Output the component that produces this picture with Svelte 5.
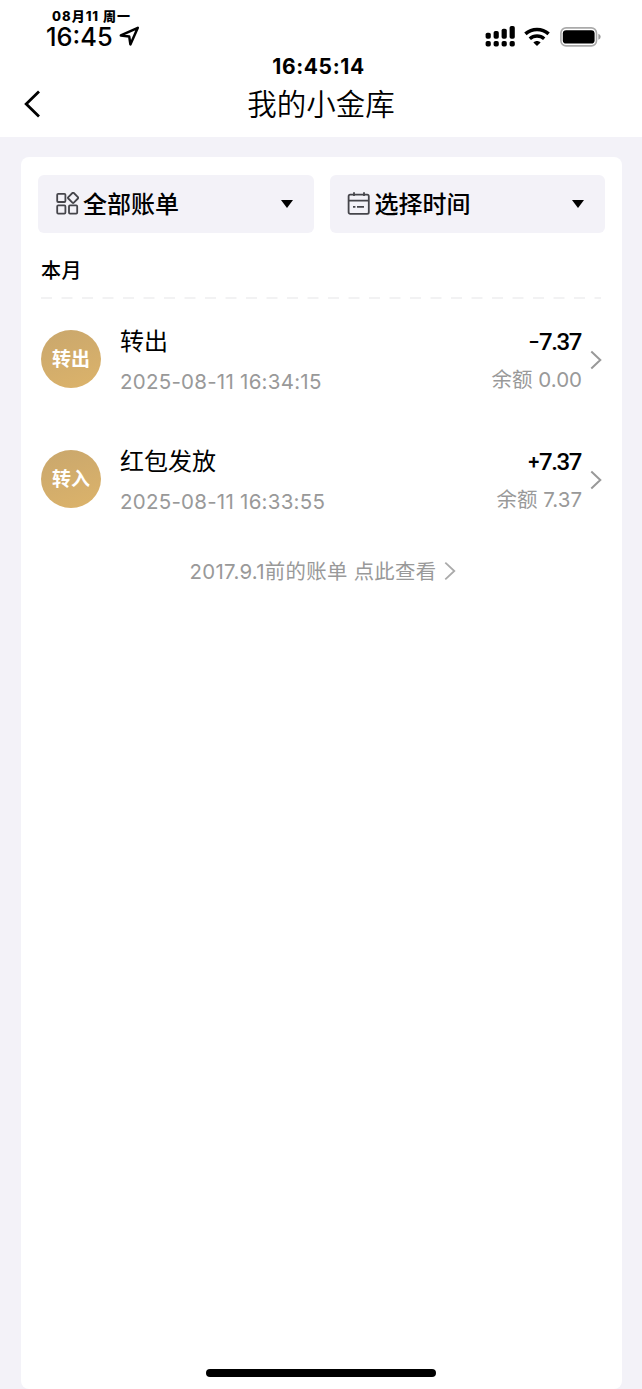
<script lang="ts">
    type Bill = {
        badge: string;
        title: string;
        time: string;
        sign: string;
        amount: string;
        balance: string;
    };

    const bills: Bill[] = [
        { badge: '转出', title: '转出', time: '2025-08-11 16:34:15', sign: '−', amount: '7.37', balance: '0.00' },
        { badge: '转入', title: '红包发放', time: '2025-08-11 16:33:55', sign: '+', amount: '7.37', balance: '7.37' },
    ];
</script>

<div class="page">
    <header>
        <div class="status-bar">
            <div class="status-left">
                <div class="date">08月11 周一</div>
                <div class="clock">
                    <span>16:45</span>
                    <svg width="21" height="21" viewBox="0 0 21 21">
                        <path d="M1.8 9.4 18.8 1.8 11.4 18.4 10.2 10.4Z" fill="none" stroke="#000" stroke-width="2.5" stroke-linejoin="round" />
                    </svg>
                </div>
            </div>
            <div class="status-right">
                <svg width="30" height="21" viewBox="0 0 30 21">
                    <rect x=".6" y="6.7" width="5.2" height="6" rx="1.8" />
                    <rect x="8.6" y="5" width="5.2" height="7.7" rx="1.8" />
                    <rect x="16.6" y="2.8" width="5.2" height="9.9" rx="1.8" />
                    <rect x="24.6" y="0" width="5.2" height="12.7" rx="1.8" />
                    {#each [0.6, 8.6, 16.6, 24.6] as x}
                        <rect {x} y="15" width="5.2" height="5.6" rx="1.8" />
                    {/each}
                </svg>
                <svg class="wifi" width="26" height="20" viewBox="0 0 26 20">
                    <path d="M1.4 6.9C8 .9 18 .9 24.6 6.9" fill="none" stroke="#000" stroke-width="3.5" />
                    <path d="M5.8 11.7C9.9 8 16.1 8 20.2 11.7" fill="none" stroke="#000" stroke-width="3.4" />
                    <path d="M9.4 15.4C11.5 13.4 14.5 13.4 16.6 15.4L13 19Z" />
                </svg>
                <svg width="41" height="20" viewBox="0 0 41 20">
                    <rect x=".9" y=".9" width="35.6" height="18" rx="5.2" fill="#fff" stroke="#aaa" stroke-width="1.6" />
                    <rect x="2.8" y="3.2" width="31.8" height="13.4" rx="3.4" />
                    <path d="M38.4 6.8Q40.7 7.6 40.7 9.8T38.4 12.8Z" fill="#999" />
                </svg>
            </div>
        </div>
        <div class="seconds">16:45:14</div>
        <nav>
            <svg class="back" width="20" height="28" viewBox="0 0 20 28">
                <path d="M17 1.6 4.2 14 17 26.4" fill="none" stroke="#000" stroke-width="2.8" />
            </svg>
            <h1>我的小金库</h1>
        </nav>
    </header>

    <main>
        <div class="filters">
            <div class="filter">
                <svg width="24" height="24" viewBox="0 0 24 24" fill="none" stroke="#45454b" stroke-width="1.8">
                    <rect x="2.2" y="1.8" width="8.2" height="8.2" rx="1" />
                    <rect x="2.2" y="13.4" width="8.2" height="8.2" rx="1" />
                    <rect x="14" y="13.4" width="8.2" height="8.2" rx="1" />
                    <rect x="14.2" y="1.9" width="7.8" height="7.8" rx="1" transform="rotate(45 18.1 5.8)" />
                </svg>
                <span>全部账单</span>
                <i class="caret"></i>
            </div>
            <div class="filter">
                <svg width="24" height="24" viewBox="0 0 24 24" fill="none" stroke="#45454b" stroke-width="1.8">
                    <rect x="1.6" y="2.6" width="20.2" height="19.2" rx="1.6" />
                    <path d="M1.6 8.7H21.8M7 .3V4M17 .3V4M6 14.8H8.4M10 14.8H17" />
                </svg>
                <span>选择时间</span>
                <i class="caret"></i>
            </div>
        </div>

        <h2>本月</h2>
        <svg class="dashes" width="560" height="2" viewBox="0 0 560 2">
            <path d="M0 1H560" stroke="#eeeef0" stroke-width="1.6" stroke-dasharray="11 9.5" />
        </svg>

        {#each bills as bill}
            <div class="bill">
                <div class="badge">{bill.badge}</div>
                <div class="info">
                    <div class="bill-title">{bill.title}</div>
                    <div class="time">{bill.time}</div>
                </div>
                <div class="money">
                    <div class="amount"><span class="sign">{bill.sign}</span>{bill.amount}</div>
                    <div class="balance">余额 {bill.balance}</div>
                </div>
                <svg class="arrow" width="12" height="20" viewBox="0 0 12 20">
                    <path d="M1.3 1.6 10.3 10 1.3 18.4" fill="none" stroke="#999" stroke-width="2" />
                </svg>
            </div>
        {/each}

        <div class="older">
            <span>2017.9.1前的账单 点此查看</span>
            <svg width="12" height="20" viewBox="0 0 12 20">
                <path d="M1.3 1.6 10.3 10 1.3 18.4" fill="none" stroke="#aaa" stroke-width="1.8" />
            </svg>
        </div>
    </main>
    <div class="home-indicator"></div>
</div>

<style>
    :global(body) {
        margin: 0;
        background: #f3f2f8;
    }

    .page {
        position: relative;
        box-sizing: border-box;
        height: 1389px;
        display: flex;
        flex-direction: column;
        background: #f3f2f8;
        color: #000;
        font-family: Inter, "Noto Sans CJK SC", sans-serif;
    }

    header {
        box-sizing: border-box;
        height: 137px;
        flex-shrink: 0;
        background: #fff;
    }

    /* Status bar */
    .status-bar {
        display: flex;
        justify-content: space-between;
        height: 55px;
        padding: 0 41px 0 46px;
    }

    .date {
        height: 14px;
        margin: 9px 0 0 6px;
        font-size: 13px;
        line-height: 14px;
        font-weight: 800;
        letter-spacing: 1px;
        white-space: nowrap;
    }

    .clock {
        display: flex;
        align-items: center;
        gap: 6px;
        height: 27px;
        font-size: 25.4px;
        line-height: 27px;
        font-weight: 550;
    }

    .status-right {
        display: flex;
        align-items: center;
        height: 21px;
        margin-top: 26px;
    }

    .wifi {
        margin: 0 10px 0 9px;
    }

    .seconds {
        height: 22px;
        padding: 1px 5px 0 0;
        font-size: 21px;
        line-height: 22px;
        font-weight: 700;
        letter-spacing: 0.6px;
        text-align: center;
    }

    nav {
        display: flex;
        align-items: center;
        height: 52px;
        padding: 0 22px;
    }

    .back {
        flex-shrink: 0;
    }

    h1 {
        flex: 1;
        margin: 0 20px 0 0;
        font-size: 29.5px;
        line-height: 40px;
        font-weight: 350;
        text-align: center;
    }

    /* Card */
    main {
        box-sizing: border-box;
        height: 1232px;
        margin: 20px 20px 0 21px;
        padding: 18px 17px 0;
        border-radius: 8px;
        background: #fff;
    }

    .filters {
        display: flex;
        gap: 16px;
    }

    .filter {
        box-sizing: border-box;
        display: flex;
        align-items: center;
        flex: 1;
        height: 58px;
        padding: 0 21px 0 17px;
        border-radius: 6px;
        background: #f3f2f8;
        font-size: 24px;
        font-weight: 500;
    }

    .filter span {
        flex: 1;
        margin: -4px 0 0 4px;
    }

    .caret {
        border: 6.5px solid transparent;
        border-top: 8px solid #000;
        border-bottom: 0;
    }

    h2 {
        margin: 23px 0 0 3px;
        font-size: 20px;
        line-height: 30px;
        font-weight: 500;
        letter-spacing: 0.4px;
    }

    .dashes {
        display: block;
        margin: 11px 0 0 3px;
    }

    .bill {
        display: flex;
        align-items: center;
        height: 120px;
        margin-left: 3px;
    }

    .badge {
        width: 60px;
        height: 58px;
        border-radius: 50%;
        background: linear-gradient(160deg, #c9a76d, #dcb36a);
        color: #fff;
        font-size: 19px;
        line-height: 60px;
        font-weight: 700;
        text-align: center;
    }

    .info {
        flex: 1;
        margin: 2px 0 0 19px;
    }

    .bill-title {
        font-size: 24px;
        line-height: 36px;
        font-weight: 400;
    }

    .time,
    .balance {
        margin-top: 7px;
        color: #999;
        font-size: 20.5px;
        line-height: 30px;
        font-weight: 375;
        white-space: nowrap;
    }

    .time {
        letter-spacing: 0.25px;
    }

    .money {
        text-align: right;
    }

    .amount {
        display: flex;
        align-items: center;
        justify-content: flex-end;
        margin-top: 1px;
        font-family: Roboto, sans-serif;
        font-size: 24px;
        line-height: 36px;
        font-weight: 500;
        letter-spacing: -1.4px;
        padding-right: 1px;
    }

    .sign {
        margin-right: 1px;
        font-size: 20px;
    }

    .balance {
        margin-top: 5px;
    }

    .arrow {
        margin: 2px 3px 0 8px;
    }

    .older {
        display: flex;
        align-items: center;
        justify-content: center;
        gap: 8px;
        height: 30px;
        margin: 17px 0 0 3px;
        color: #999;
        font-size: 20.4px;
        font-weight: 375;
        letter-spacing: 0.3px;
    }

    .older span {
        margin-top: -2px;
    }

    .home-indicator {
        position: absolute;
        left: 206px;
        bottom: 12px;
        width: 230px;
        height: 8px;
        border-radius: 4px;
        background: #000;
    }
</style>
